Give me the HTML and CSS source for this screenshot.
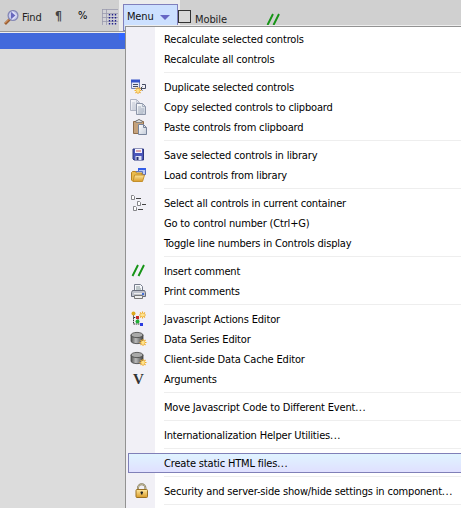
FILE: index.html
```
<!DOCTYPE html>
<html lang="en">
<head>
<meta charset="utf-8">
<title>Controls</title>
<link rel="stylesheet" href="styles.css">
</head>
<body>
<svg width="0" height="0" class="defs">
  <defs>
    <linearGradient id="metal" x1="0" x2="1"><stop offset="0" stop-color="#555"/><stop offset=".4" stop-color="#bbb"/><stop offset="1" stop-color="#444"/></linearGradient>
    <linearGradient id="gold" x1="0" y1="0" x2="0" y2="1"><stop offset="0" stop-color="#ffe9a0"/><stop offset="1" stop-color="#d99b28"/></linearGradient>
    <linearGradient id="paper" x1="0" y1="0" x2="1" y2="1"><stop offset="0" stop-color="#fff"/><stop offset="1" stop-color="#c3cbd9"/></linearGradient>
    <g id="spark"><path d="M0-3.500V3.500M-3.500 0H3.500M-2.500-2.500L2.500 2.500M2.500-2.500L-2.500 2.500" stroke="#f0ad2c" stroke-width="1.100"/><circle r="1.700" fill="#ffe48a"/></g>
    <g id="db"><path d="M1 4v6c0 3.500 12 3.500 12 0V4z" fill="url(#metal)" stroke="#444" stroke-width=".8"/><ellipse cx="7" cy="4" rx="6" ry="2.600" fill="#aaa" stroke="#444" stroke-width=".8"/><use href="#spark" x="13" y="11.500"/></g>
    <g id="sheet"><path d="M.5.5h6l3 3v8h-9z" fill="url(#paper)" stroke="#8d95a8"/><path d="M6.500.5v3h3M2 4h3M2 6h6M2 8h6M2 10h5" stroke="#9aa3b5" fill="none" stroke-width=".8"/></g>
    <g id="slashes"><path d="M1.500 12L7 1M7.500 12L13 1" stroke="#169416" stroke-width="1.900"/></g>
  </defs>
</svg>
<div class="window">
  <header class="toolbar">
    <svg class="find-icon" width="15" height="15" viewBox="0 0 15 15"><path d="M1 14l5-5" stroke="#9a5c30" stroke-width="2.600"/><path d="M1 13.300l4-4" stroke="#e2a36b"/><circle cx="9" cy="5.500" r="4.900" fill="#c6c9ee" stroke="#8588b5" stroke-width="1.300"/><path d="M7 2l4.500 3.500L7 9z" fill="#6868bd"/><path d="M8.500 1.500l3.500 4-3.500 4" stroke="#f1f1ff" fill="none" stroke-width=".8"/></svg>
    <span class="find">Find</span>
    <span class="pilcrow">¶</span>
    <span class="percent">%</span>
    <svg class="grid-icon" width="16" height="16" viewBox="0 0 16 16"><path d="M0 0h16v16H0z" fill="#d2d2d6"/><path d="M0 .5h16M0 4.500h16M0 8.500h16M0 12.500h16M.5 0v16M4.500 0v16" stroke="#9a9aad" stroke-width=".8"/><path d="M7.500 5v11M10.500 5v11M13.500 5v11" stroke="#20208a" stroke-dasharray="1.500 1.500" stroke-width="1.400"/></svg>
    <div class="menu-slot"><button class="menu-button">Menu<i class="arrow"></i></button></div>
    <i class="checkbox"></i>
    <span class="mobile">Mobile</span>
    <svg class="comment-icon" width="15" height="13"><use href="#slashes"/></svg>
  </header>
  <div class="workspace"><div class="selection"><i></i></div></div>
</div>
<nav class="dropdown">
  <div class="item"><i></i><span>Recalculate selected controls</span></div>
  <div class="item"><i></i><span>Recalculate all controls</span></div>
  <hr>
  <div class="item"><i><svg width="17" height="16"><path d="M1.500 1.500h8v8h-8z" fill="#e6eaf8" stroke="#7682b5"/><path d="M1 2h9" stroke="#3553c9" stroke-width="3"/><path d="M3 5.500h5M3 7.500h5M11 9.500h4.500v-4H12M12.500 7.500l-2 2 2 2" stroke="#454b63" fill="none"/><use href="#spark" x="8" y="11.500"/></svg></i><span>Duplicate selected controls</span></div>
  <div class="item"><i><svg width="17" height="16"><g opacity=".65"><use href="#sheet"/></g><use href="#sheet" x="6" y="4"/></svg></i><span>Copy selected controls to clipboard</span></div>
  <div class="item"><i><svg width="18" height="16"><path d="M3.500 2.500h10v12h-10z" fill="#c5a27c" stroke="#8f6d4b"/><path d="M6 3.500V1.500h2V.5h2v1h2v2z" fill="#ddd" stroke="#777" stroke-width=".8"/><path d="M8.500 5.500h5l3 3v7h-8z" fill="url(#paper)" stroke="#78849c"/><path d="M13.500 5.500v3h3" fill="none" stroke="#78849c"/></svg></i><span>Paste controls from clipboard</span></div>
  <hr>
  <div class="item"><i><svg width="17" height="16"><path d="M3 2h10.500v11H4l-1-1z" fill="#4b55ba" stroke="#2d367e"/><path d="M5 2h7v4H5z" fill="#f4f4ff"/><path d="M6 4h5" stroke="#c75b5b"/><path d="M5.500 9h6v4h-6z" fill="#dce0f5"/><path d="M6.500 10h2v3h-2z" fill="#28306c"/></svg></i><span>Save selected controls in library</span></div>
  <div class="item"><i><svg width="17" height="16"><path d="M8.500 1.500h7v6h-7z" fill="#b9cafb" stroke="#5269bd"/><path d="M8 2h8" stroke="#345ee8" stroke-width="2"/><path d="M5.500 4.500h7v5h-7z" fill="#dce5ff" stroke="#6077bf"/><path d="M1.500 13V5.500l1-1h3l1 1.500H12v8H2.500z" fill="#eabc4d" stroke="#b88422"/><path d="M3 14.500l1.500-6.500h10l-2 6.500z" fill="url(#gold)" stroke="#c4902c"/></svg></i><span>Load controls from library</span></div>
  <hr>
  <div class="item"><i><svg width="17" height="17"><g fill="#fff" stroke="#77777c" stroke-width=".9"><path d="M1.500.5h2l1 1v3h-3zM7.500 6.500h2l1 1v3h-3zM3.500 11.500h2l1 1v3h-3z"/></g><path d="M6 3.500h5M12 9.500h4M8 14.500h5" stroke="#444"/></svg></i><span>Select all controls in current container</span></div>
  <div class="item"><i></i><span>Go to control number (Ctrl+G)</span></div>
  <div class="item"><i></i><span>Toggle line numbers in Controls display</span></div>
  <hr>
  <div class="item"><i><svg width="17" height="14"><use href="#slashes" x="1"/></svg></i><span>Insert comment</span></div>
  <div class="item"><i><svg width="17" height="16"><path d="M4.500 8V1.500h6l2 2V8z" fill="#f5f6fa" stroke="#777d8c"/><path d="M6 4h4M6 6h5" stroke="#899"/><path d="M2.500 7.500h12l1 2v4h-14v-4z" fill="#bfc2cc" stroke="#686d7b"/><path d="M4 10.500h8" stroke="#eee"/><path d="M4.500 12.500h8v3h-8z" fill="#eee" stroke="#777"/><path d="M12 10h2v2h-2z" fill="#456fd8"/></svg></i><span>Print comments</span></div>
  <hr>
  <div class="item"><i><svg width="17" height="16"><path d="M3.500 2v11h7M3.500 6.500h5M8 7v3" stroke="#333" fill="none" stroke-dasharray="1.500 .7"/><circle cx="3.500" cy="2.500" r="2" fill="#dca91c"/><path d="M6 5h3v3H6z" fill="#c62929"/><circle cx="7.500" cy="10.500" r="2" fill="#20ae36"/><path d="M10 12h3v3h-3z" fill="#2b3ce0"/><use href="#spark" x="12.500" y="4"/></svg></i><span>Javascript Actions Editor</span></div>
  <div class="item"><i><svg width="17" height="16"><use href="#db"/></svg></i><span>Data Series Editor</span></div>
  <div class="item"><i><svg width="17" height="16"><use href="#db"/></svg></i><span>Client-side Data Cache Editor</span></div>
  <div class="item"><i class="letter">V</i><span>Arguments</span></div>
  <hr>
  <div class="item"><i></i><span>Move Javascript Code to Different Event<b>...</b></span></div>
  <hr>
  <div class="item"><i></i><span>Internationalization Helper Utilities<b>...</b></span></div>
  <hr>
  <div class="item active"><i></i><span>Create static HTML files<b>...</b></span></div>
  <hr>
  <div class="item"><i><svg class="lock" width="17" height="16"><path d="M5 7V5a3.700 3.700 0 017.400 0v2" fill="none" stroke="#82785a" stroke-width="2"/><path d="M5 6V5a3.700 3.700 0 017.400 0v1" fill="none" stroke="#ddd6b5" stroke-width=".7"/><rect x="3" y="6.500" width="11.500" height="8" rx="1" fill="url(#gold)" stroke="#9b7021"/><path d="M8.700 8.500v3M7.500 9.500h2.500" stroke="#222" stroke-width="1.500"/></svg></i><span>Security and server-side show/hide settings in component<b>...</b></span></div>
  <hr>
</nav>
</body>
</html>
```
FILE: styles.css
```
* { box-sizing: border-box; }
body { margin: 0; width: 461px; height: 508px; overflow: hidden; position: relative; background: #dcdcdc; color: #000; font: 11px/20px "DejaVu Sans Condensed", "DejaVu Sans", sans-serif; font-stretch: condensed; letter-spacing: -.17px; }
.defs { position: absolute; }
.toolbar { display: flex; height: 33px; background: #d0d0d0; border-bottom: 1px solid #eee; box-shadow: inset 0 -1px #999; }
.find-icon { margin: 10px 0 0 4px; }
.find { margin: 8px 0 0 3px; width: 33px; color: #222; }
.pilcrow { margin-top: 6px; width: 23px; font-size: 12px; font-weight: bold; color: #444; }
.percent { margin-top: 6px; width: 24px; }
.grid-icon { margin-top: 9px; }
.menu-slot { flex: none; width: 61px; height: 31px; padding: 4px 2px 0 4px; background: #ececec; margin-left: 1px; }
.menu-button { display: flex; align-items: center; width: 55px; height: 27px; padding: 0 0 1px 3px; border: 1px solid #8080bd; background: #cce0ff; font: inherit; letter-spacing: inherit; color: #111; }
.arrow { margin-left: 6px; border: 5px solid transparent; border-top: 5px solid #6666c4; border-bottom: 0; }
.checkbox { flex: none; width: 13px; height: 13px; margin: 10px 0 0 -2px; border: 1px solid #333; background: #d8d8d8; }
.mobile { margin: 10px 0 0 4px; width: 71px; color: #222; letter-spacing: -.1px; }
.comment-icon { margin-top: 13px; }
.selection { width: 125px; height: 16px; background: #4169dc; }
.selection i { display: block; width: 6px; height: 7px; margin-left: 119px; background: #3366ff; }
.dropdown { position: absolute; left: 125px; top: 26px; width: 336px; height: 482px; overflow: hidden; border: solid #929292; border-width: 1px 0 0 1px; padding: 2px 0 0 2px; background: linear-gradient(90deg, #f1f0f6 29px, #fff 29px); box-shadow: 0 -1px #eee; }
.item { display: flex; align-items: center; height: 20px; white-space: nowrap; }
.item i { flex: none; width: 36px; height: 20px; padding-left: 2px; display: flex; align-items: center; }
.item span { height: 20px; line-height: 22px; }
.item b { font-weight: normal; letter-spacing: .5px; }
.item .letter { padding-left: 5px; font: bold 15px/20px "Liberation Serif", serif; color: #333; }
.lock { margin: -1px 0 0 3px; }
.active { border: 1px solid #8080b8; border-right: 0; background: linear-gradient(#e0f4ff, #e0e0ff); }
.active i { width: 35px; }
hr { height: 1px; margin: 3px 0 4px 36px; border: 0; background: #eee; }
```
